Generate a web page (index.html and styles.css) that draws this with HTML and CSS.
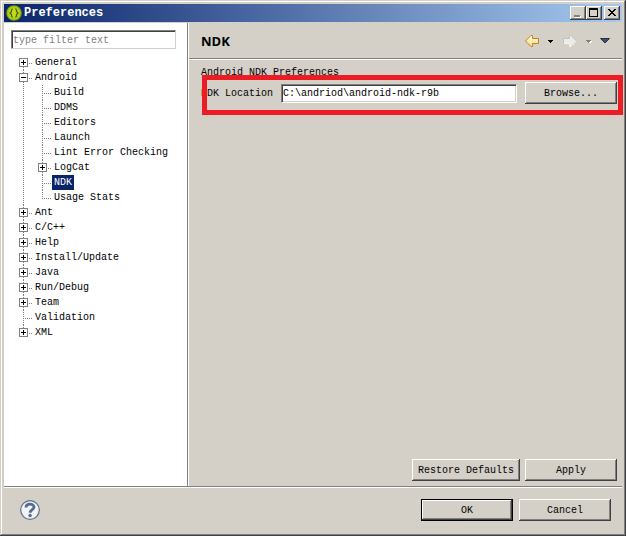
FILE: index.html
```html
<!DOCTYPE html>
<html lang="en">
<head>
<meta charset="utf-8">
<title>Preferences</title>
<link rel="stylesheet" href="styles.css">
</head>
<body>
<div class="window">
  <header class="titlebar">
    <svg class="app-icon" width="16" height="16" viewBox="0 0 16 16" aria-hidden="true">
      <defs><radialGradient id="lime"><stop offset="0.5" stop-color="#c0dc18"/><stop offset="0.8" stop-color="#a4c80c"/><stop offset="1" stop-color="#6c8c10"/></radialGradient></defs>
      <circle cx="8" cy="8" r="7.8" fill="url(#lime)"/>
      <path d="M7 4 H6.500 Q5.500 4 5.500 5.500 V6.500 L4 8 L5.500 9.500 V10.500 Q5.500 12 6.500 12 H7 M9 4 H9.500 Q10.500 4 10.500 5.500 V6.500 L12 8 L10.500 9.500 V10.500 Q10.500 12 9.500 12 H9" fill="none" stroke="#4c5c08" stroke-width="1.200"/>
    </svg>
    <h1 class="title">Preferences</h1>
    <div class="window-controls">
      <button class="control" aria-label="Minimize"><svg width="12" height="10" viewBox="0 0 12 10"><path d="M3 8h6v2H3z" fill="#fff"/><path d="M2 7h6v2H2z" fill="#808080"/></svg></button>
      <button class="control" aria-label="Maximize"><svg width="12" height="10" viewBox="0 0 12 10"><path d="M1 0h9v9H1zM2 2v6h7V2z" fill="#000" fill-rule="evenodd"/></svg></button>
      <button class="control close" aria-label="Close"><svg width="12" height="10" viewBox="0 0 12 10"><path d="M2 1h2v1h1v1h2V2h1V1h2v1H9v1H8v1H7v1h1v1h1v1h1v1H8V7H7V6H5v1H4v1H2V7h1V6h1V5h1V4H4V3H3V2H2z" fill="#000"/></svg></button>
    </div>
  </header>

  <main class="content">
    <nav class="sidebar">
      <input class="field filter" type="text" placeholder="type filter text" aria-label="Filter preferences">
      <ul class="tree">
        <li><div class="row"><button class="toggle plus" aria-label="Expand General"></button><span class="label">General</span></div></li>
        <li><div class="row"><button class="toggle" aria-label="Collapse Android"></button><span class="label">Android</span></div>
          <ul class="branch">
            <li><div class="row"><span class="label">Build</span></div></li>
            <li><div class="row"><span class="label">DDMS</span></div></li>
            <li><div class="row"><span class="label">Editors</span></div></li>
            <li><div class="row"><span class="label">Launch</span></div></li>
            <li><div class="row"><span class="label">Lint Error Checking</span></div></li>
            <li><div class="row"><button class="toggle plus" aria-label="Expand LogCat"></button><span class="label">LogCat</span></div></li>
            <li><div class="row"><span class="label selected">NDK</span></div></li>
            <li><div class="row"><span class="label">Usage Stats</span></div></li>
          </ul>
        </li>
        <li><div class="row"><button class="toggle plus" aria-label="Expand Ant"></button><span class="label">Ant</span></div></li>
        <li><div class="row"><button class="toggle plus" aria-label="Expand C/C++"></button><span class="label">C/C++</span></div></li>
        <li><div class="row"><button class="toggle plus" aria-label="Expand Help"></button><span class="label">Help</span></div></li>
        <li><div class="row"><button class="toggle plus" aria-label="Expand Install/Update"></button><span class="label">Install/Update</span></div></li>
        <li><div class="row"><button class="toggle plus" aria-label="Expand Java"></button><span class="label">Java</span></div></li>
        <li><div class="row"><button class="toggle plus" aria-label="Expand Run/Debug"></button><span class="label">Run/Debug</span></div></li>
        <li><div class="row"><button class="toggle plus" aria-label="Expand Team"></button><span class="label">Team</span></div></li>
        <li><div class="row"><span class="label">Validation</span></div></li>
        <li><div class="row"><button class="toggle plus" aria-label="Expand XML"></button><span class="label">XML</span></div></li>
      </ul>
    </nav>

    <section class="page">
      <header class="page-header">
        <h2 class="page-title">NDK</h2>
        <div class="history">
          <button class="tool" aria-label="Back"><svg width="16" height="14" viewBox="0 0 16 14"><defs><linearGradient id="gold" x2="0" y2="1"><stop stop-color="#fffbe4"/><stop offset="1" stop-color="#f8dc80"/></linearGradient></defs><path d="M1.500 7 L7 1.500 H8.500 V4.500 H14.500 V9.500 H8.500 V12.500 H7 Z" fill="url(#gold)" stroke="#c0841c"/></svg></button>
          <button class="tool" aria-label="Back history"><svg width="6" height="4" viewBox="0 0 6 4"><path d="M0 1h5v1H4v1H3v1H2V3H1V2H0z" fill="#000"/></svg></button>
          <button class="tool" aria-label="Forward" disabled><svg width="16" height="14" viewBox="0 0 16 14"><path d="M14.500 7 L9 1.500 H7.500 V4.500 H1.500 V9.500 H7.500 V12.500 H9 Z" fill="#ececea" stroke="#c4c2be"/><path d="M2 9.500 H7.500 V12.500 H9 L14.500 7" fill="none" stroke="#f4f4f2"/></svg></button>
          <button class="tool" aria-label="Forward history" disabled><svg width="6" height="4" viewBox="0 0 6 4"><path d="M1 2h5v1H5v1H3z" fill="#fff"/><path d="M0 1h5v1H4v1H3v1H2V3H1V2H0z" fill="#808080"/></svg></button>
          <button class="tool" aria-label="Menu"><svg width="10" height="6" viewBox="0 0 10 6"><path d="M.5.500h9L5 5z" fill="#484878" stroke="#2c2c48"/></svg></button>
        </div>
      </header>
      <div class="page-body">
        <p class="caption">Android NDK Preferences</p>
        <div class="location">
          <label for="ndk-location">NDK Location</label>
          <input class="field path" id="ndk-location" type="text" value="C:\andriod\android-ndk-r9b">
          <button class="button">Browse...</button>
          <div class="highlight"></div>
        </div>
        <div class="page-actions">
          <button class="button wide">Restore Defaults</button>
          <button class="button">Apply</button>
        </div>
      </div>
    </section>
  </main>

  <footer class="footer">
    <button class="help" aria-label="Help"><svg width="20" height="20" viewBox="0 0 20 20"><circle cx="10" cy="10" r="9.300" fill="#f2f2f2" stroke="#587090" stroke-width="1.200"/><path d="M6 7.500 C6 3.200 14 3.200 14 7 C14 9.600 10.200 9.600 10.200 12.700" fill="none" stroke="#546c94" stroke-width="2.800"/><circle cx="10.100" cy="15.500" r="1.700" fill="#546c94"/></svg></button>
    <div class="dialog-actions">
      <button class="button default">OK</button>
      <button class="button">Cancel</button>
    </div>
  </footer>
</div>
</body>
</html>
```
FILE: styles.css
```css
:root {
  --face: #d4d0c8;
  --shadow: #808080;
  --dark: #404040;
  --navy: #0a246a;
  --dots: repeating-linear-gradient(#808080 0 1px, transparent 1px 2px);
  --dots-across: repeating-linear-gradient(90deg, #808080 0 1px, transparent 1px 2px);
}

* { box-sizing: border-box; }

body {
  margin: 0;
  color: #000;
  font: 10px/15px "Liberation Mono", monospace;
}

button, input { font: inherit; color: inherit; border-radius: 0; }
button { padding: 0; background: none; border: 0; }
svg { display: block; }
ul { list-style: none; margin: 0; padding: 0; }
h1, h2, p { margin: 0; }

.window {
  display: flex;
  flex-direction: column;
  min-height: 100vh;
  padding: 4px;
  background: var(--face);
  box-shadow: inset -1px -1px var(--dark), inset 1px 1px var(--face), inset -2px -2px var(--shadow), inset 2px 2px #fff;
}

.titlebar {
  display: flex;
  align-items: center;
  height: 18px;
  padding: 0 2px;
  background: linear-gradient(90deg, var(--navy), #a6caf0);
}

.title {
  flex: 1;
  margin-left: 2px;
  color: #fff;
  font-size: 12px;
  line-height: 18px;
}

.window-controls { display: flex; }

.control {
  display: grid;
  place-items: center;
  width: 16px;
  height: 14px;
  background: var(--face);
  box-shadow: inset -1px -1px var(--dark), inset 1px 1px #fff, inset -2px -2px var(--shadow);
}

.close { margin-left: 2px; }

.content {
  display: flex;
  flex: 1;
  margin-top: 1px;
  border-bottom: 1px solid var(--shadow);
}

.sidebar {
  flex: 0 0 184px;
  padding: 7px 11px 7px 7px;
  background: #fff;
  border-right: 1px solid var(--shadow);
}

.field {
  width: 100%;
  height: 19px;
  padding: 1px 1px 0;
  background: #fff;
  border: 1px solid;
  border-color: var(--shadow) #fff #fff var(--shadow);
  box-shadow: inset 1px 1px var(--dark), inset -1px -1px var(--face);
  outline: 0;
}

.filter {
  display: block;
  border-color: var(--shadow) var(--face) var(--face) var(--shadow);
  box-shadow: inset 1px 1px var(--dark);
}

.filter::placeholder { color: var(--shadow); opacity: 1; }

.tree { padding: 6px 0 0 8px; }

.tree li { background: var(--dots) 4px 0 / 1px 100% no-repeat; }
.tree > li:first-child { background-position: 4px 8px; }
.tree li:last-child { background-size: 1px 8px; }
.branch { padding-left: 19px; }

.row {
  display: flex;
  align-items: center;
  height: 15px;
  background: var(--dots-across) 4px 8px / 9px 1px no-repeat;
}

.toggle {
  width: 9px;
  height: 9px;
  margin-right: 5px;
  border: 1px solid var(--shadow);
  background: linear-gradient(#000, #000) center / 5px 1px no-repeat, #fff;
}

.plus {
  background: linear-gradient(#000, #000) center / 5px 1px no-repeat, linear-gradient(#000, #000) center / 1px 5px no-repeat, #fff;
}

.label { padding: 0 2px; white-space: nowrap; }
.label:first-child { margin-left: 14px; }
.selected { color: #fff; background: var(--navy); }

.page {
  display: flex;
  flex: 1;
  flex-direction: column;
  min-width: 0;
  border-left: 1px solid #fff;
}

.page-header {
  display: flex;
  align-items: center;
  justify-content: space-between;
  height: 36px;
  padding: 0 12px;
  border-bottom: 1px solid var(--shadow);
}

.page-title { font: bold 13px/18px "Open Sans", sans-serif; }

.history { display: flex; align-items: center; gap: 8px; }

.page-body {
  display: flex;
  flex: 1;
  flex-direction: column;
  padding: 5px 5px 5px 12px;
  border-top: 1px solid #fff;
}

.location {
  position: relative;
  display: flex;
  align-items: center;
  gap: 8px;
  margin-top: 2px;
}

.location label { white-space: nowrap; }
.path { flex: 1; min-width: 0; }

.highlight {
  position: absolute;
  inset: -7px -6px -11px 1px;
  border: 5px solid #ed1c24;
  pointer-events: none;
}

.button {
  width: 92px;
  height: 22px;
  background: var(--face);
  box-shadow: inset -1px -1px var(--dark), inset 1px 1px #fff, inset -2px -2px var(--shadow);
}

.wide { width: 108px; }
.default { border: 1px solid #000; }

.page-actions {
  display: flex;
  justify-content: flex-end;
  gap: 5px;
  margin-top: auto;
}

.footer {
  display: flex;
  align-items: center;
  justify-content: space-between;
  height: 45px;
  padding: 0 11px 0 16px;
  border-top: 1px solid #fff;
}

.dialog-actions { display: flex; gap: 6px; }
```
